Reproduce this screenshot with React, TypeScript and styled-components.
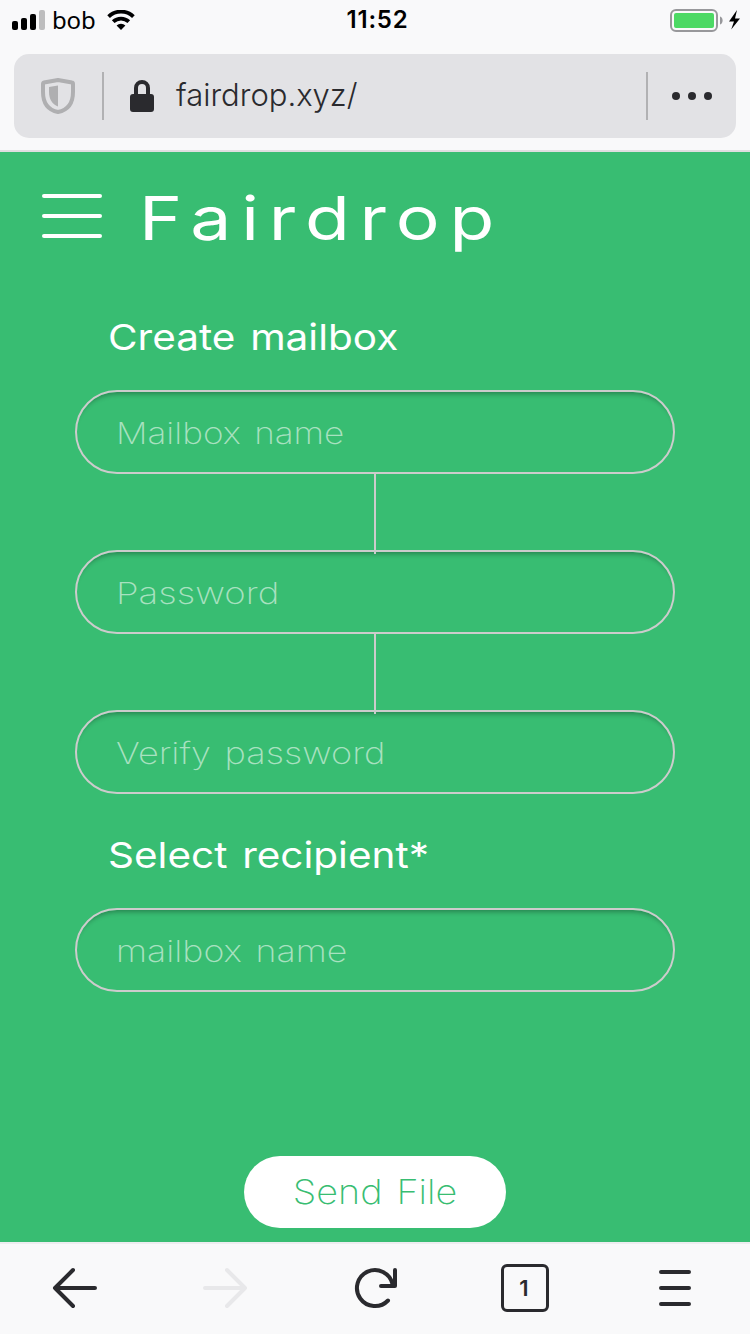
import React from 'react';
import styled, { createGlobalStyle } from 'styled-components';

const GREEN = '#38bd72';
const INK = '#2a2a2e';

const GlobalStyle = createGlobalStyle`
  * { box-sizing: border-box; }
  body { margin: 0; background: #f9f9fa; font-family: Inter, "Liberation Sans", sans-serif; }
`;

const Screen = styled.div`
  width: 750px;
  height: 1334px;
  display: flex;
  flex-direction: column;
  overflow: hidden;
  background: #f9f9fa;
`;

const StatusBar = styled.header`
  display: grid;
  grid-template-columns: 1fr auto 1fr;
  align-items: center;
  height: 40px;
  padding: 0 8px 0 12px;
  color: #000;
`;

const StatusGroup = styled.div<{ $end?: boolean }>`
  display: flex;
  align-items: center;
  justify-content: ${(p) => (p.$end ? 'flex-end' : 'flex-start')};
`;

const Carrier = styled.span`
  margin: 0 12px 0 7px;
  font: 400 24px/38px "Noto Sans", sans-serif;
  letter-spacing: -0.2px;
`;

const Clock = styled.time`
  padding-left: 1px;
  font-size: 24px;
  font-weight: 600;
  line-height: 40px;
  letter-spacing: 0.8px;
`;

const AddressArea = styled.div`
  height: 112px;
  padding: 14px 14px 12px;
  border-bottom: 2px solid #dedee0;
`;

const AddressBar = styled.div`
  display: flex;
  align-items: center;
  height: 84px;
  padding: 0 24px 0 27px;
  border-radius: 15px;
  background: #e2e2e5;
`;

const Divider = styled.span`
  width: 2px;
  height: 48px;
  background: #b1b1b3;
`;

const ShieldIcon = styled.svg`
  margin-right: 27px;
`;

const LockIcon = styled.svg`
  margin: 0 22px 0 26px;
`;

const Url = styled.span`
  flex: 1;
  padding-bottom: 2px;
  font-size: 31px;
  font-weight: 360;
  line-height: 40px;
  color: ${INK};
`;

const MoreIcon = styled.svg`
  margin-left: 24px;
`;

const Page = styled.main`
  display: flex;
  flex-direction: column;
  height: 1090px;
  background: ${GREEN};
  color: #fff;
`;

const Masthead = styled.div`
  display: flex;
  align-items: flex-start;
  height: 165px;
  padding: 34px 42px 0;
`;

const MenuButton = styled.span`
  display: flex;
  flex-direction: column;
  gap: 16px;
  width: 60px;
  margin: 8px 37px 0 0;
`;

const MenuLine = styled.span`
  height: 4px;
  border-radius: 2px;
  background: #fff;
`;

const WideText = styled.span<{ $stretch: number; $center?: boolean }>`
  display: inline-block;
  white-space: nowrap;
  transform: scaleX(${(p) => p.$stretch});
  transform-origin: ${(p) => (p.$center ? 'center' : 'left')} center;
`;

const Brand = styled.h1`
  margin: 0;
  font-size: 61px;
  font-weight: 370;
  line-height: 65px;
  letter-spacing: 8.2px;
`;

const Form = styled.form`
  display: flex;
  flex-direction: column;
  flex: 1;
  padding: 0 75px;
`;

const SectionTitle = styled.h2<{ $later?: boolean }>`
  height: 40px;
  margin: ${(p) => (p.$later ? '41px 0 33px 33px' : '0 0 33px 33px')};
  font-size: 36px;
  font-weight: 430;
  line-height: 40px;
  word-spacing: 3px;
`;

const Field = styled.div`
  height: 84px;
  padding: 1px 39px 0;
  border: 2px solid #cccccc;
  border-radius: 42px;
  box-shadow: inset 0 8px 5px -6px rgba(0, 0, 0, 0.3);
  color: #a8e1c0;
  font-size: 30px;
  font-weight: 250;
  line-height: 80px;
  word-spacing: 3px;
`;

const Connector = styled.span`
  z-index: 1;
  align-self: center;
  width: 2px;
  height: 80px;
  margin-bottom: -4px;
  background: #ccc;
`;

const SendButton = styled.button`
  align-self: center;
  width: 262px;
  height: 72px;
  margin: auto 0 14px;
  padding: 0;
  border: 0;
  border-radius: 36px;
  background: #fff;
  color: ${GREEN};
  font-family: inherit;
  font-size: 34px;
  font-weight: 250;
  line-height: 72px;
  word-spacing: 3px;
`;

const Toolbar = styled.nav`
  display: grid;
  grid-template-columns: repeat(5, 1fr);
  place-items: center;
  height: 92px;
  padding-bottom: 2px;
  border-top: 2px solid #ededf0;
`;

const TabCount = styled.span`
  width: 48px;
  height: 48px;
  padding-right: 2px;
  border: 3px solid ${INK};
  border-radius: 6px;
  color: ${INK};
  font-size: 22px;
  font-weight: 600;
  line-height: 43px;
  text-align: center;
`;

const ToolIcon = styled.svg<{ $muted?: boolean }>`
  fill: none;
  stroke: ${(p) => (p.$muted ? '#e8e8ea' : INK)};
  stroke-width: 4;
  stroke-linecap: round;
  stroke-linejoin: round;
  overflow: visible;
`;

export default function App() {
  return (
    <Screen>
      <GlobalStyle />
      <StatusBar>
        <StatusGroup>
          <svg width="33" height="20" viewBox="0 0 33 20">
            <rect x="0" y="11" width="6" height="9" rx="2" />
            <rect x="9" y="8" width="6" height="12" rx="2" />
            <rect x="18" y="4" width="6" height="16" rx="2" />
            <rect x="27" y="0" width="6" height="20" rx="2" fill="#bdbdbe" />
          </svg>
          <Carrier>bob</Carrier>
          <svg width="28" height="20" viewBox="0 0 28 20">
            <path d="M1.6 6.600a17.8 17.8 0 0 1 24.8 0M6.2 11.700a11.3 11.3 0 0 1 15.6 0" fill="none" stroke="#000" strokeWidth="3.8" />
            <path d="M14 20l-4.4-4.4a6.2 6.2 0 0 1 8.8 0z" />
          </svg>
        </StatusGroup>
        <Clock>11:52</Clock>
        <StatusGroup $end>
          <svg width="72" height="24" viewBox="0 0 72 24">
            <rect x="1" y="2" width="46" height="21" rx="5" fill="none" stroke="#98989b" strokeWidth="2" />
            <rect x="4" y="5" width="40" height="15" rx="2" fill="#4cd964" />
            <path d="M50 8.5c3.5 1 3.5 7 0 8z" fill="#98989b" />
            <path d="M67 2L59 13.5h5L61.200 21.500 70 10.500h-5z" />
          </svg>
        </StatusGroup>
      </StatusBar>
      <AddressArea>
        <AddressBar>
          <ShieldIcon width="34" height="36" viewBox="0 0 34 36">
            <path d="M17 2L31 4.500c1 0 1 .8 1 1.500v8c0 11-5 18-15 20C7 32 2 25 2 14V6c0-.7 0-1.300 1-1.500z" fill="none" stroke="#afafb1" strokeWidth="4" strokeLinejoin="round" />
            <path d="M17 7.500v21C11 26 8 21 8 14V9z" fill="#afafb1" />
          </ShieldIcon>
          <Divider />
          <LockIcon width="24" height="32" viewBox="0 0 24 32">
            <path d="M6 16V8a6 6 0 0 1 12 0v8" fill="none" stroke={INK} strokeWidth="4" />
            <rect y="14" width="24" height="18" rx="3" fill={INK} />
          </LockIcon>
          <Url>fairdrop.xyz/</Url>
          <Divider />
          <MoreIcon width="40" height="8" viewBox="0 0 40 8" fill={INK}>
            <circle cx="4" cy="4" r="4" />
            <circle cx="20" cy="4" r="4" />
            <circle cx="36" cy="4" r="4" />
          </MoreIcon>
        </AddressBar>
      </AddressArea>
      <Page>
        <Masthead>
          <MenuButton>
            <MenuLine />
            <MenuLine />
            <MenuLine />
          </MenuButton>
          <Brand><WideText $stretch={1.2}>Fairdrop</WideText></Brand>
        </Masthead>
        <Form>
          <SectionTitle><WideText $stretch={1.125}>Create mailbox</WideText></SectionTitle>
          <Field><WideText $stretch={1.17}>Mailbox name</WideText></Field>
          <Connector />
          <Field><WideText $stretch={1.22}>Password</WideText></Field>
          <Connector />
          <Field><WideText $stretch={1.205}>Verify password</WideText></Field>
          <SectionTitle $later><WideText $stretch={1.125}>Select recipient*</WideText></SectionTitle>
          <Field><WideText $stretch={1.19}>mailbox name</WideText></Field>
          <SendButton type="button"><WideText $stretch={1.11} $center>Send File</WideText></SendButton>
        </Form>
      </Page>
      <Toolbar>
        <ToolIcon width="44" height="40" viewBox="0 0 44 40">
          <path d="M20 2L2 20l18 18M2 20h40" />
        </ToolIcon>
        <ToolIcon $muted width="44" height="40" viewBox="0 0 44 40">
          <path d="M24 2l18 18-18 18M42 20H2" />
        </ToolIcon>
        <ToolIcon width="44" height="40" viewBox="0 0 44 40">
          <path d="M35 32.500A18 18 0 1 1 39.500 16L41 18M42 2v16H28" />
        </ToolIcon>
        <TabCount>1</TabCount>
        <ToolIcon width="32" height="36" viewBox="0 0 32 36">
          <path d="M2 2h28M2 18h28M2 34h28" />
        </ToolIcon>
      </Toolbar>
    </Screen>
  );
}
